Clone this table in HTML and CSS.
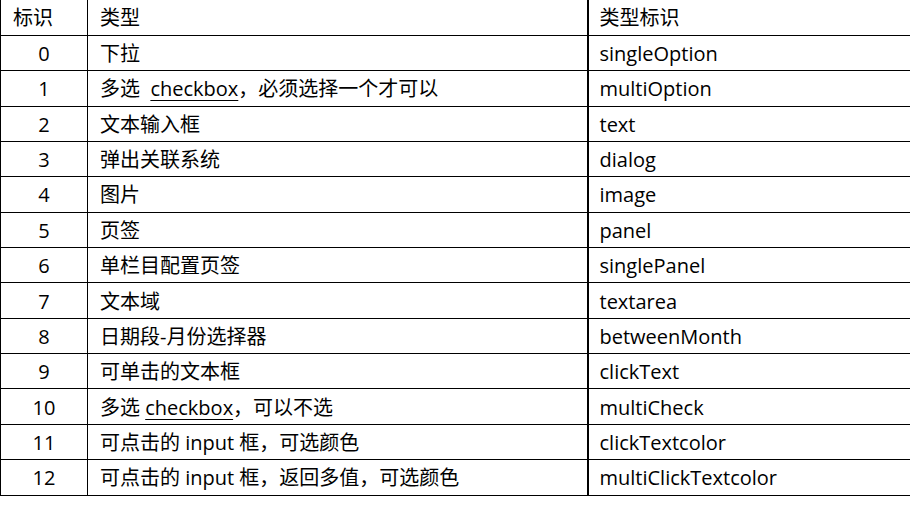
FILE: index.html
```html
<!DOCTYPE html>
<html>
<head>
<meta charset="utf-8">
<link rel="stylesheet" href="styles.css">
</head>
<body>
<table class="tbl">
  <colgroup><col class="c1"><col class="c2"><col class="c3"></colgroup>
  <tr class="head"><td class="id head-id">标识</td><td class="type">类型</td><td class="key">类型标识</td></tr>
  <tr><td class="id">0</td><td class="type">下拉</td><td class="key">singleOption</td></tr>
  <tr><td class="id">1</td><td class="type">多选&nbsp; <span class="ul">checkbox</span>，必须选择一个才可以</td><td class="key">multiOption</td></tr>
  <tr><td class="id">2</td><td class="type">文本输入框</td><td class="key">text</td></tr>
  <tr><td class="id">3</td><td class="type">弹出关联系统</td><td class="key">dialog</td></tr>
  <tr><td class="id">4</td><td class="type">图片</td><td class="key">image</td></tr>
  <tr><td class="id">5</td><td class="type">页签</td><td class="key">panel</td></tr>
  <tr><td class="id">6</td><td class="type">单栏目配置页签</td><td class="key">singlePanel</td></tr>
  <tr><td class="id">7</td><td class="type">文本域</td><td class="key">textarea</td></tr>
  <tr><td class="id">8</td><td class="type">日期段-月份选择器</td><td class="key">betweenMonth</td></tr>
  <tr><td class="id">9</td><td class="type">可单击的文本框</td><td class="key">clickText</td></tr>
  <tr><td class="id">10</td><td class="type">多选 <span class="ul">checkbox</span>，可以不选</td><td class="key">multiCheck</td></tr>
  <tr><td class="id">11</td><td class="type">可点击的 input 框，可选颜色</td><td class="key">clickTextcolor</td></tr>
  <tr><td class="id">12</td><td class="type">可点击的 input 框，返回多值，可选颜色</td><td class="key">multiClickTextcolor</td></tr>
</table>
</body>
</html>
```
FILE: styles.css
```css
html, body {
  margin: 0;
  padding: 0;
  background: #fff;
}
body {
  font-family: "Open Sans", "Noto Sans CJK SC", sans-serif;
  font-size: 20px;
  color: #000;
  overflow: hidden;
}
.tbl {
  border-collapse: collapse;
  table-layout: fixed;
  width: 920px;
}
.c1 { width: 87px; }
.c2 { width: 500px; }
.c3 { width: 333px; }
.tbl td {
  height: 35.36px;
  padding: 2px 0 0 0;
  border: 1px solid #000;
  white-space: nowrap;
  line-height: 1;
  box-sizing: border-box;
}
.head td { border-top: none; }
.tbl td.id {
  text-align: center;
}
.tbl td.head-id {
  text-align: left;
  padding-left: 12px;
}
.tbl td.type {
  padding-left: 12px;
  border-right: 2px solid #000;
}
.tbl td.key {
  padding-left: 11px;
}
.ul {
  text-decoration: underline;
  text-underline-offset: 4px;
  text-decoration-thickness: 1px;
}
```
